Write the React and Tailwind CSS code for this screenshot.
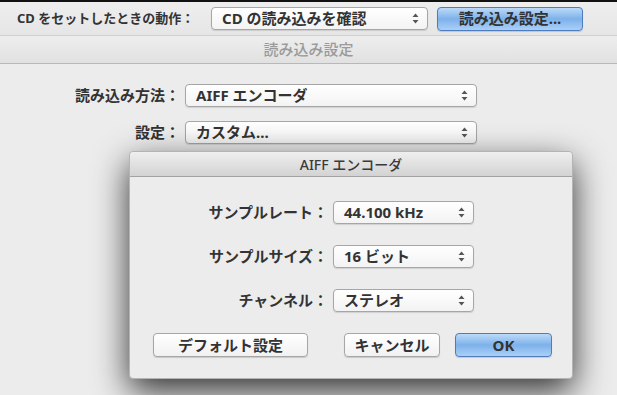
import React from "react";

const font = { fontFamily: '"Noto Sans", "Noto Sans CJK JP", sans-serif' };

function Arrows() {
  return (
    <svg width="7" height="11" viewBox="0 0 7 11" className="shrink-0">
      <path d="M3.5 0.5 L6.5 4 L0.5 4 Z" fill="#555" />
      <path d="M3.5 10.5 L6.5 7 L0.5 7 Z" fill="#555" />
    </svg>
  );
}

function Select({ value, className = "" }) {
  return (
    <div
      className={
        "flex items-center justify-between h-[23px] rounded-[4px] border border-[#a6a6a6] bg-gradient-to-b from-white to-[#f3f3f3] pl-[10px] pr-[8px] shadow-[0_1px_1px_rgba(0,0,0,0.12)] text-[15px] text-[#333] " +
        className
      }
    >
      <span className="leading-none">{value}</span>
      <Arrows />
    </div>
  );
}

function Button({ children, blue, className = "" }) {
  const look = blue
    ? "border-[#4f7cbc] bg-gradient-to-b from-[#bcdaf8] via-[#7db1ea] to-[#a9d0f7]"
    : "border-[#a6a6a6] bg-gradient-to-b from-white to-[#f1f1f1]";
  return (
    <div
      className={
        "flex items-center justify-center h-[24px] rounded-[4px] border text-[15px] text-[#333] shadow-[0_1px_1px_rgba(0,0,0,0.15)] " +
        look +
        " " +
        className
      }
    >
      {children}
    </div>
  );
}

function Row({ label, value, labelW, selectW }) {
  return (
    <div className="flex items-center">
      <div className={"text-right text-[15px] text-[#333] " + labelW}>{label}</div>
      <Select value={value} className={"ml-[5px] " + selectW} />
    </div>
  );
}

export default function App() {
  return (
    <div
      className="w-[617px] h-[395px] overflow-hidden bg-[#ececec] flex flex-col font-bold"
      style={font}
    >
      <div className="h-[2px] bg-[#111]" />
      <div className="h-[34px] flex items-center bg-gradient-to-b from-[#eeeeee] to-[#e6e6e6] border-b border-[#d0d0d0]">
        <div className="w-[211px] pl-[17px] text-[13px] text-[#333]">CD をセットしたときの動作：</div>
        <Select value="CD の読み込みを確認" className="w-[217px]" />
        <Button blue className="ml-[9px] w-[146px] text-[14px]">
          読み込み設定...
        </Button>
      </div>
      <div className="h-[28px] flex items-center justify-center bg-gradient-to-b from-[#eeeeee] to-[#e1e1e1] border-b border-[#b8b8b8] text-[15px] font-medium text-[#9a9a9a]">
        読み込み設定
      </div>
      <div className="flex flex-col pt-[20px] gap-[14px]">
        <Row label="読み込み方法：" value="AIFF エンコーダ" labelW="w-[180px]" selectW="w-[292px]" />
        <Row label="設定：" value="カスタム..." labelW="w-[180px]" selectW="w-[292px]" />
      </div>
      <div className="mt-[7px] ml-[129px] w-[444px] h-[228px] shrink-0 flex flex-col rounded-[4px] border border-[#b4b4b4] bg-[#ececec] shadow-[0_12px_34px_rgba(0,0,0,0.8)]">
        <div className="h-[25px] flex items-center justify-center rounded-t-[4px] bg-gradient-to-b from-[#efefef] to-[#d3d3d3] border-b border-[#a2a2a2] text-[14px] font-medium text-[#3a3a3a]">
          AIFF エンコーダ
        </div>
        <div className="flex flex-col pt-[24px] gap-[21px]">
          <Row label="サンプルレート：" value="44.100 kHz" labelW="w-[198px]" selectW="w-[141px]" />
          <Row label="サンプルサイズ：" value="16 ビット" labelW="w-[198px]" selectW="w-[141px]" />
          <Row label="チャンネル：" value="ステレオ" labelW="w-[198px]" selectW="w-[141px]" />
        </div>
        <div className="flex items-center mt-[21px] pl-[23px]">
          <Button className="w-[155px]">デフォルト設定</Button>
          <Button className="ml-[36px] w-[96px]">キャンセル</Button>
          <Button blue className="ml-[15px] w-[97px]">
            OK
          </Button>
        </div>
      </div>
    </div>
  );
}
